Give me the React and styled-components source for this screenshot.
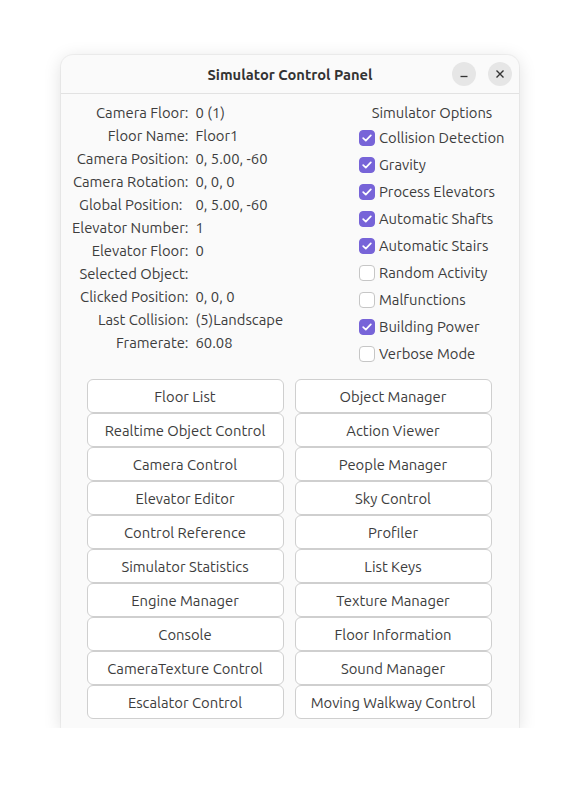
import React from "react";
import styled, { createGlobalStyle } from "styled-components";

const GlobalStyle = createGlobalStyle`
  body {
    margin: 0;
    background: #ffffff;
    font-family: "Ubuntu", "Noto Sans", "Open Sans", sans-serif;
    color: #3d3d3d;
  }
`;

const info = [
  ["Camera Floor:", "0 (1)"],
  ["Floor Name:", "Floor1"],
  ["Camera Position:", "0, 5.00, -60"],
  ["Camera Rotation:", "0, 0, 0"],
  ["Global Position:", "0, 5.00, -60", true],
  ["Elevator Number:", "1"],
  ["Elevator Floor:", "0"],
  ["Selected Object:", ""],
  ["Clicked Position:", "0, 0, 0"],
  ["Last Collision:", "(5)Landscape"],
  ["Framerate:", "60.08"],
];

const options = [
  ["Collision Detection", true],
  ["Gravity", true],
  ["Process Elevators", true],
  ["Automatic Shafts", true],
  ["Automatic Stairs", true],
  ["Random Activity", false],
  ["Malfunctions", false],
  ["Building Power", true],
  ["Verbose Mode", false],
];

const buttons = [
  "Floor List", "Object Manager",
  "Realtime Object Control", "Action Viewer",
  "Camera Control", "People Manager",
  "Elevator Editor", "Sky Control",
  "Control Reference", "Profiler",
  "Simulator Statistics", "List Keys",
  "Engine Manager", "Texture Manager",
  "Console", "Floor Information",
  "CameraTexture Control", "Sound Manager",
  "Escalator Control", "Moving Walkway Control",
];

const App = () => {
  return (
    <>
      <GlobalStyle />
      <Page>
        <Window>
          <TitleBar>
            <Title>Simulator Control Panel</Title>
            <TitleButtons>
              <RoundButton>
                <svg width="10" height="10" viewBox="0 0 10 10">
                  <line x1="1.5" y1="7.5" x2="8.5" y2="7.5" stroke="#333" strokeWidth="1.3" />
                </svg>
              </RoundButton>
              <RoundButton>
                <svg width="10" height="10" viewBox="0 0 10 10">
                  <path d="M1.5 1.5 L8.5 8.5 M8.5 1.5 L1.5 8.5" stroke="#333" strokeWidth="1.4" />
                </svg>
              </RoundButton>
            </TitleButtons>
          </TitleBar>
          <Content>
            <TopRow>
              <InfoGrid>
                {info.map(([label, value, pad]) => (
                  <React.Fragment key={label}>
                    <InfoLabel $pad={pad}>{label}</InfoLabel>
                    <InfoValue>{value}</InfoValue>
                  </React.Fragment>
                ))}
              </InfoGrid>
              <Options>
                <OptionsHeader>Simulator Options</OptionsHeader>
                {options.map(([name, checked]) => (
                  <OptionRow key={name}>
                    <Box $checked={checked}>
                      {checked && (
                        <svg width="10" height="8" viewBox="0 0 10 8">
                          <path d="M1.2 4.2 L3.8 6.6 L8.8 1.4" fill="none" stroke="#fff" strokeWidth="1.7" strokeLinecap="round" strokeLinejoin="round" />
                        </svg>
                      )}
                    </Box>
                    <span>{name}</span>
                  </OptionRow>
                ))}
              </Options>
            </TopRow>
            <ButtonGrid>
              {buttons.map((b) => (
                <PanelButton key={b}>{b}</PanelButton>
              ))}
            </ButtonGrid>
          </Content>
        </Window>
      </Page>
    </>
  );
};

const Page = styled.div`
  display: flex;
  justify-content: center;
  padding-top: 55px;
`;

const Window = styled.div`
  width: 458px;
  background: #fafafa;
  border-radius: 12px 12px 0 0;
  box-shadow: 0 3px 18px rgba(0, 0, 0, 0.13), 0 0 0 1px rgba(0, 0, 0, 0.04);
`;

const TitleBar = styled.div`
  height: 38px;
  display: flex;
  align-items: center;
  justify-content: center;
  position: relative;
  border-bottom: 1px solid #e2e2e2;
`;

const Title = styled.div`
  font-weight: bold;
  font-size: 14.7px;
  color: #333;
`;

const TitleButtons = styled.div`
  position: absolute;
  right: 7px;
  top: 7px;
  display: flex;
  gap: 12px;
`;

const RoundButton = styled.div`
  width: 24px;
  height: 24px;
  border-radius: 50%;
  background: #e6e6e6;
  display: flex;
  align-items: center;
  justify-content: center;
`;

const Content = styled.div`
  padding: 7px 14px 9px 10px;
  display: flex;
  flex-direction: column;
  align-items: center;
  gap: 12px;
`;

const TopRow = styled.div`
  display: flex;
  justify-content: space-between;
  width: 100%;
  font-size: 14.8px;
`;

const InfoGrid = styled.div`
  display: grid;
  grid-template-columns: auto auto;
  grid-auto-rows: 23px;
  column-gap: 7px;
  align-items: center;
  align-self: flex-start;
  margin-left: 1px;
`;

const InfoLabel = styled.div`
  text-align: right;
  padding-right: ${(p) => (p.$pad ? "6px" : "0")};
`;

const InfoValue = styled.div``;

const Options = styled.div`
  display: flex;
  flex-direction: column;
  width: 146px;
`;

const OptionsHeader = styled.div`
  height: 23px;
  line-height: 23px;
  text-align: center;
`;

const OptionRow = styled.div`
  height: 27px;
  display: flex;
  align-items: center;
  gap: 4px;
  white-space: nowrap;
`;

const Box = styled.div`
  width: 16px;
  height: 16px;
  flex-shrink: 0;
  box-sizing: border-box;
  border-radius: 4px;
  background: ${(p) => (p.$checked ? "#7764d8" : "#ffffff")};
  border: 1px solid ${(p) => (p.$checked ? "#7764d8" : "#c6c6c6")};
  display: flex;
  align-items: center;
  justify-content: center;
`;

const ButtonGrid = styled.div`
  display: grid;
  grid-template-columns: 197px 197px;
  grid-auto-rows: 34px;
  column-gap: 11px;
  margin-left: 2px;
`;

const PanelButton = styled.div`
  background: #ffffff;
  border: 1px solid #cfcfcf;
  border-radius: 6px;
  display: flex;
  align-items: center;
  justify-content: center;
  font-size: 14.8px;
  color: #3d3d3d;
`;

export default App;
